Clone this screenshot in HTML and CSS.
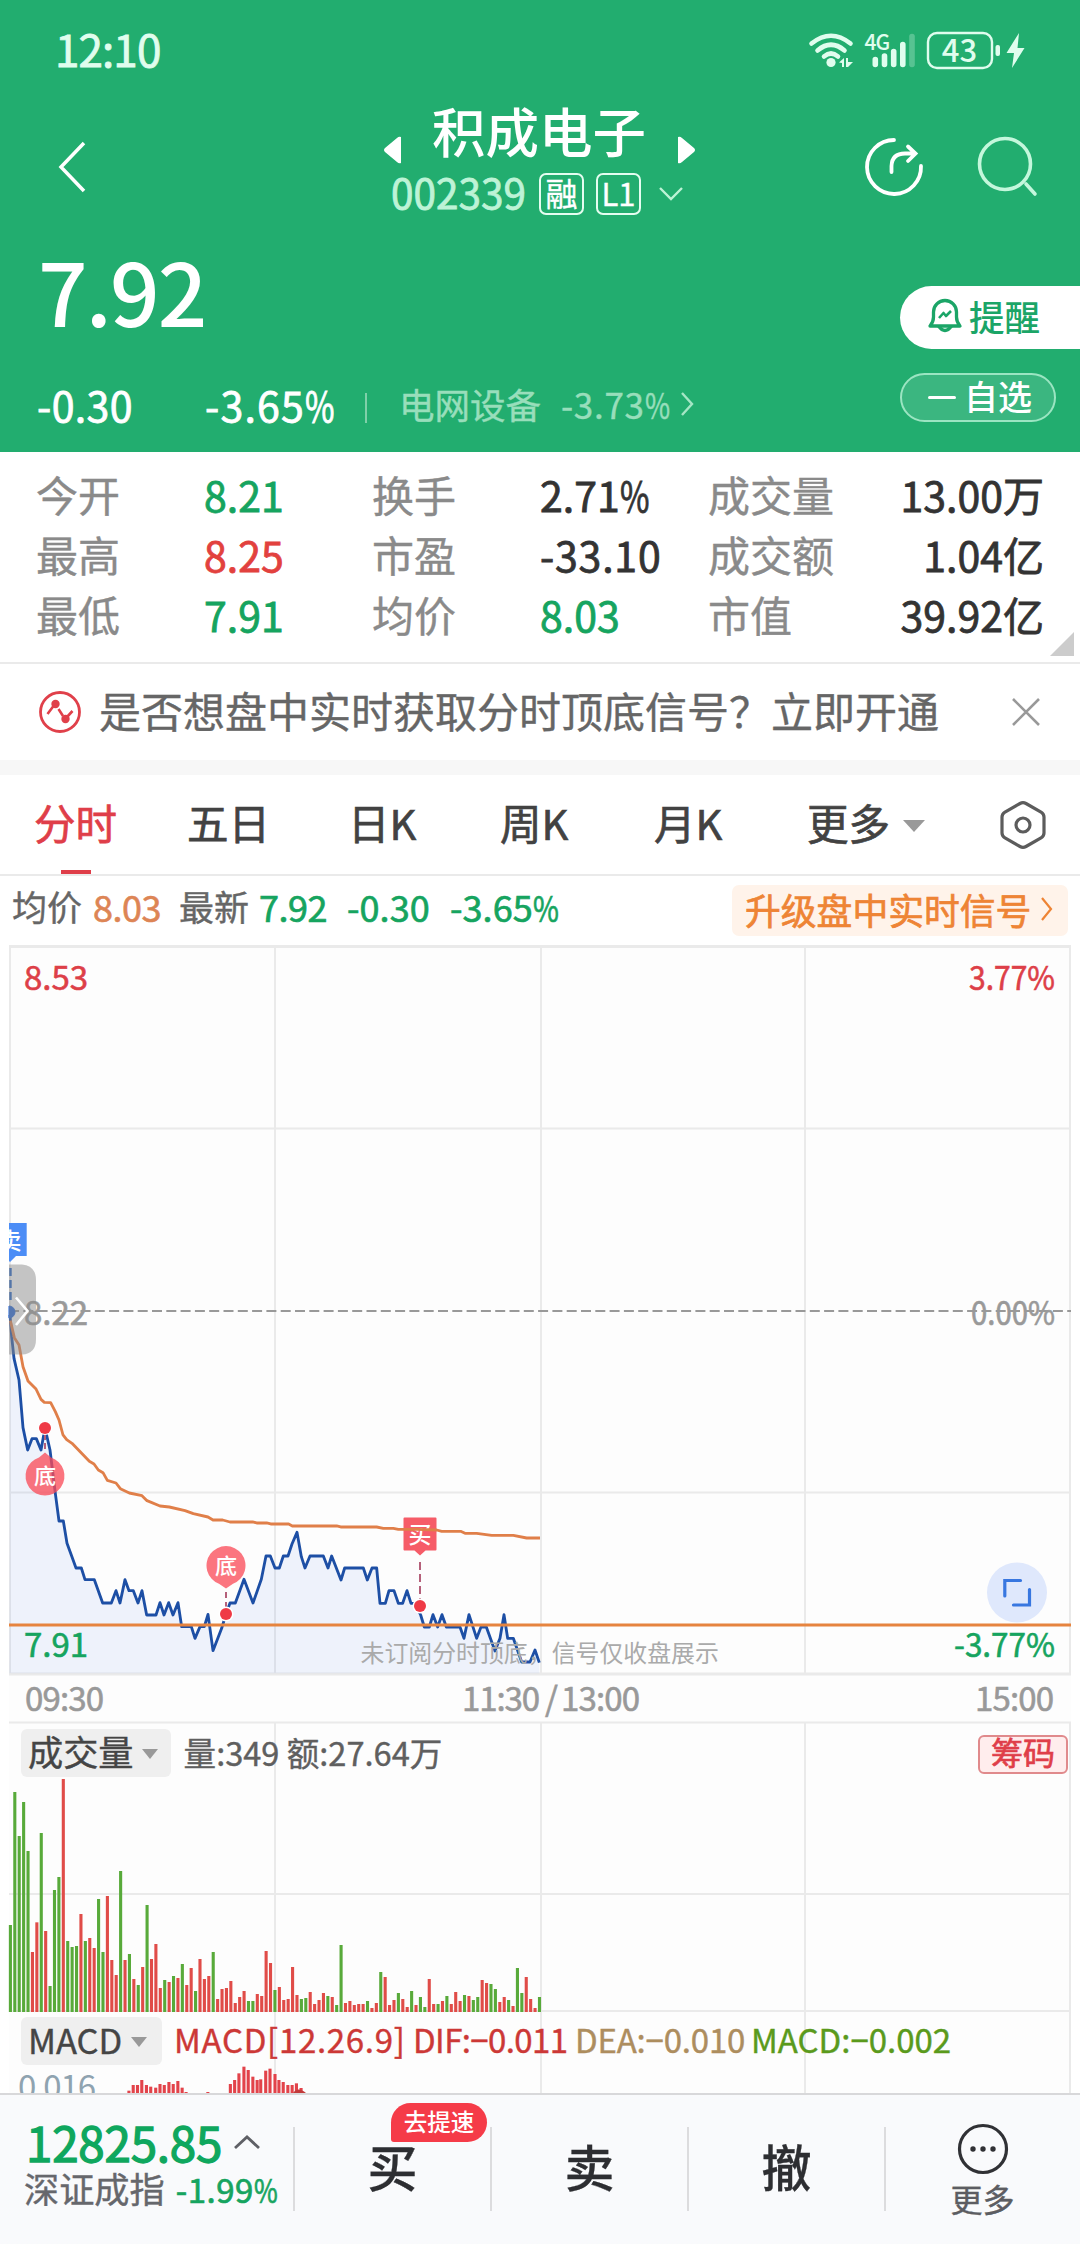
FILE: index.html
```html
<!DOCTYPE html>
<html lang="zh-CN">
<head>
<meta charset="utf-8">
<title>积成电子 002339</title>
<link rel="stylesheet" href="styles.css">
</head>
<body>
<header class="hero">
  <div class="status">
    <span class="clock">12:10</span>
    <svg class="status-icons" width="220" height="44" viewBox="806 28 220 44">
      <g fill="none" stroke="#e0fdee" stroke-width="4.6" stroke-linecap="round">
        <path d="M811.500 43.500Q831 28 850.500 43.500M817.500 50.500Q831 39 844.500 50.500M824 56.500Q831 50.500 838 56.500"/>
      </g>
      <circle cx="831" cy="62.500" r="4.600" fill="#e0fdee"/>
      <path d="M839 62.500L844 58V67H842V63ZM846 58H848V62H853L848 67H846Z" fill="#e0fdee"/>
      <text x="864.500" y="50" class="net">4G</text>
      <g stroke="#e0fdee" stroke-width="5.600" stroke-linecap="round">
        <path d="M875.300 59.500V64.500M884.500 56V64.500M893.700 51.500V64.500M902.800 44.500V64.500"/>
        <path d="M912 36.500V64.500" opacity=".28"/>
      </g>
      <rect x="928" y="33" width="64" height="35" rx="9" fill="none" stroke="#e0fdee" stroke-width="2.400"/>
      <text x="959.500" y="61.500" text-anchor="middle" class="level">43</text>
      <rect x="995.500" y="45" width="4.500" height="11" rx="2" fill="#e0fdee"/>
      <path d="M1019 33L1006.500 53H1014L1012 68L1024.500 48H1017.500Z" fill="#e0fdee"/>
    </svg>
  </div>
  <div class="titlebar">
    <svg class="back" width="32" height="56" viewBox="0 0 32 56"><path d="M29 4L6 28L29 52" fill="none" stroke="#fff" stroke-width="3.500"/></svg>
    <div class="stock">
      <div class="name-row">
        <svg width="20" height="28" viewBox="0 0 20 28"><path d="M18 1V27Q16 28 14 26L2 16Q0 14 2 12L14 2Q16 0 18 1Z" fill="#fff"/></svg>
        <h1>积成电子</h1>
        <svg width="20" height="28" viewBox="0 0 20 28"><path d="M2 1V27Q4 28 6 26L18 16Q20 14 18 12L6 2Q4 0 2 1Z" fill="#fff"/></svg>
      </div>
      <div class="code-row">
        <span class="code">002339</span><span class="chip">融</span><span class="chip">L1</span>
        <svg width="26" height="16" viewBox="0 0 26 16"><path d="M2 2L13 13L24 2" fill="none" stroke="#bdf3d6" stroke-width="2.400"/></svg>
      </div>
    </div>
    <div class="tools">
      <svg width="60" height="60" viewBox="0 0 60 60" fill="none" stroke="#fff" stroke-width="3.800" stroke-linecap="round"><path d="M31 3A27 27 0 1 0 58 29"/><path d="M28.500 35V29Q29 16.500 42 16.500H52M45 9.500L52.500 16.500L45 24"/></svg>
      <svg width="60" height="60" viewBox="0 0 60 60" fill="none" stroke="#c4f7dc" stroke-width="3.600" stroke-linecap="round"><circle cx="28" cy="27" r="25.500"/><path d="M49 47L58 57"/></svg>
    </div>
  </div>
  <div class="quote">
    <div class="quote-main">
      <div class="price">7.92</div>
      <div class="change-row">
        <span class="delta">-0.30</span><span class="pct">-3.65<span class="p">%</span></span><i class="bar"></i>
        <span class="sector">电网设备</span><span class="sector-pct">-3.73<span class="p">%</span></span>
        <svg width="14" height="26" viewBox="0 0 14 26"><path d="M2 2L12 13L2 24" fill="none" stroke="#a5e6c5" stroke-width="2.400"/></svg>
      </div>
    </div>
    <div class="quote-actions">
      <div class="remind">
        <svg width="34" height="36" viewBox="0 0 34 36" fill="none" stroke="#1ba567" stroke-width="3.300" stroke-linejoin="round"><path d="M5.500 19V14A11.500 11.500 0 0 1 28.500 14V19Q28.500 24 32 28H2Q5.500 24 5.500 19Z"/><path d="M10.500 28Q17 37 23.500 28"/><path d="M11 20L15.500 15L18 18L23 13" stroke-width="2.600"/></svg>
        <span>提醒</span>
      </div>
      <div class="watch"><i></i><span>自选</span></div>
    </div>
  </div>
</header>

<section class="stats">
  <span class="k">今开</span><span class="v green">8.21</span><span class="k">换手</span><span class="v">2.71<span class="p">%</span></span><span class="k">成交量</span><span class="v end">13.00万</span>
  <span class="k">最高</span><span class="v red">8.25</span><span class="k">市盈</span><span class="v wide">-33.10</span><span class="k">成交额</span><span class="v end">1.04亿</span>
  <span class="k">最低</span><span class="v green">7.91</span><span class="k">均价</span><span class="v green">8.03</span><span class="k">市值</span><span class="v end">39.92亿</span>
  <i class="corner"></i>
</section>

<section class="notice">
  <svg width="44" height="44" viewBox="0 0 44 44"><circle cx="22" cy="22" r="19.500" fill="none" stroke="#e0404a" stroke-width="2.800"/><path d="M9.500 24L17 14M20.500 19L25 26M29 27L34.500 21" fill="none" stroke="#e0404a" stroke-width="2.600"/><circle cx="17.500" cy="14" r="4.200" fill="#e0404a"/><circle cx="27.500" cy="29" r="4.200" fill="#e0404a"/></svg>
  <p>是否想盘中实时获取分时顶底信号？立即开通</p>
  <svg width="30" height="30" viewBox="0 0 30 30"><path d="M2 2L28 28M28 2L2 28" stroke="#999" stroke-width="2.600"/></svg>
</section>

<nav class="tabs">
  <span class="tab active">分时</span><span class="tab">五日</span><span class="tab">日K</span><span class="tab">周K</span><span class="tab">月K</span>
  <span class="tab more">更多<i class="tri"></i></span>
  <svg width="46" height="50" viewBox="0 0 46 50" fill="none" stroke="#5c5c5c" stroke-width="3.200"><path d="M20 3.500Q23 1.800 26 3.500L41 12Q44 14 44 17V33Q44 36 41 38L26 46.500Q23 48.200 20 46.500L5 38Q2 36 2 33V17Q2 14 5 12Z"/><circle cx="23" cy="25" r="7"/></svg>
</nav>

<section class="info">
  <span class="lbl">均价</span><span class="avg">8.03</span><span class="lbl last">最新</span><span class="green n">7.92</span><span class="green n">-0.30</span><span class="green n">-3.65<span class="p">%</span></span>
  <div class="upgrade"><span>升级盘中实时信号</span><svg width="14" height="26" viewBox="0 0 14 26"><path d="M2 2L11 13L2 24" fill="none" stroke="#ee8435" stroke-width="2.200"/></svg></div>
</section>

<section class="charts">
  <svg class="plot" width="1080" height="1149" viewBox="0 944 1080 1149">
    <rect x="9" y="945" width="1062" height="1148" fill="#fdfdfd"/>
    <g stroke="#eaeaea" stroke-width="2">
      <path d="M9 946.500H1071" stroke-width="3"/>
      <path d="M9 1128.500H1071M9 1492.500H1071M9 1722.500H1071M9 1894H1071M9 2011H1071"/>
      <path d="M9 1674H1071" stroke-width="3"/>
      <path d="M10 945V1675M275 945V1675M541 945V1675M805 945V1675M1070 945V1675M275 1722V2093M541 1722V2093M805 1722V2093M1070 1722V2093"/>
    </g>
    <path d="M9 1311H1071" stroke="#999" stroke-width="2" stroke-dasharray="10 4.300"/>
    <g transform="translate(0 1200) scale(.33333)" fill="none" stroke-linejoin="round">
      <path id="price-area" fill="#3a78e0" fill-opacity=".08"/>
      <path id="price-line" stroke="#1d4fa5" stroke-width="8.500"/>
    </g>
    <g id="signals">
      <path d="M9 1223H26.700V1256H16L10 1262L9 1261Z" fill="#4c8df6"/>
      <svg x="9" y="1223" width="18" height="34" viewBox="9 1223 18 34"><text x="10" y="1248.500" text-anchor="middle" class="flag">卖</text></svg>
      <path d="M10.500 1268V1304" stroke="#1d5fc4" stroke-width="2.400" stroke-dasharray="8 4"/>
      <path d="M9 1306A6 6 0 0 1 9 1318Z" fill="#1f63d6" stroke="#1f63d6" stroke-width="1"/>

      <path d="M45 1434V1450" stroke="#b5607a" stroke-width="2" stroke-dasharray="6 3"/>
      <path d="M45 1452.500L51 1457.500A19.500 19.500 0 1 1 39 1457.500Z" fill="#fa4a57" fill-opacity=".76"/>
      <text x="45" y="1484" class="flag pin" text-anchor="middle">底</text>
      <circle cx="45" cy="1428" r="7" fill="#fff"/><circle cx="45" cy="1428" r="6" fill="#ef3a46"/>

      <path d="M226 1592V1608" stroke="#b5607a" stroke-width="2" stroke-dasharray="6 4"/>
      <path d="M226 1588.500L219 1583.800A19.500 19.500 0 1 1 233 1583.800Z" fill="#fa4a57" fill-opacity=".76"/>
      <text x="226" y="1574" class="flag pin" text-anchor="middle">底</text>
      <circle cx="226" cy="1614" r="7.500" fill="#fff"/><circle cx="226" cy="1614" r="6" fill="#ef3a46"/>

      <path d="M420 1562V1600" stroke="#b5607a" stroke-width="2" stroke-dasharray="8 4"/>
      <path d="M404.500 1517.500H435.500Q436.500 1517.500 436.500 1518.500V1549.500Q436.500 1550.500 435.500 1550.500H425.500L420 1555.500L414.500 1550.500H404.500Q403.500 1550.500 403.500 1549.500V1518.500Q403.500 1517.500 404.500 1517.500Z" fill="#f5505c" fill-opacity=".93"/>
      <text x="420" y="1542.500" class="flag" text-anchor="middle">买</text>
      <circle cx="420" cy="1606" r="7.500" fill="#fff"/><circle cx="420" cy="1606" r="6" fill="#ef3a46"/>
    </g>
    <g transform="translate(0 1200) scale(.33333)" fill="none" stroke-linejoin="round"><path id="avg-line" stroke="#e07f49" stroke-width="8.500"/></g>
    <path d="M9 1625H1071" stroke="#e6843f" stroke-width="3"/>
    <g class="axis">
      <text x="24" y="990" class="up">8.53</text><text x="1055" y="990" class="up" text-anchor="end" textLength="86" lengthAdjust="spacingAndGlyphs">3.77%</text>
      <text x="24" y="1325" class="flat">8.22</text><text x="1055" y="1325" class="flat" text-anchor="end" textLength="84" lengthAdjust="spacingAndGlyphs">0.00%</text>
      <text x="24" y="1657" class="down">7.91</text><text x="1055" y="1657" class="down" text-anchor="end" textLength="101" lengthAdjust="spacingAndGlyphs">-3.77%</text>
      <text x="25" y="1711" textLength="79" class="flat">09:30</text><text x="462" y="1711" textLength="78" class="flat">11:30</text><text x="545" y="1711" class="flat">/</text><text x="561" y="1711" textLength="79" class="flat">13:00</text><text x="1054" y="1711" text-anchor="end" textLength="79" class="flat">15:00</text>
    </g>
    <text x="360.500" y="1662" class="hint">未订阅分时顶底，信号仅收盘展示</text>
    <g id="volume"></g>
    <g id="macd"></g>
    <path d="M293 2093Q298 2086 306 2093Z" fill="#c23a3a"/>
    <text x="18" y="2099" class="macd-scale" textLength="78">0.016</text>
    <path d="M9 1264.500H22Q36 1266 36 1280V1339Q36 1354 22 1354.500H9Z" fill="#8c8c8c" fill-opacity=".5"/>
    <path d="M16 1297.500L27.500 1311L16 1325" fill="none" stroke="#fff" stroke-width="2.600"/>
    <circle cx="1017" cy="1592.500" r="30" fill="#dfe8fc"/>
    <path d="M1004.800 1596V1580.500H1020.500M1029.500 1589.500V1605H1013.500" fill="none" stroke="#3877e0" stroke-width="3.200" stroke-linecap="round"/>
  </svg>
  <div class="panel-head volume-head">
    <span class="select">成交量<i class="tri"></i></span>
    <span class="vol-text">量:349 额:27.64万</span>
    <span class="chips">筹码</span>
  </div>
  <div class="panel-head macd-head">
    <span class="select">MACD<i class="tri"></i></span>
    <span class="m1">MACD[12.26.9]</span><span class="m2">DIF:−0.011</span><span class="m3">DEA:−0.010</span><span class="m4">MACD:−0.002</span>
  </div>
</section>

<footer class="dock">
  <div class="index">
    <div class="index-top"><span>12825.85</span><svg width="28" height="16" viewBox="0 0 28 16"><path d="M2 14L14 3L26 14" fill="none" stroke="#5f6066" stroke-width="2.800"/></svg></div>
    <div class="index-sub"><span>深证成指</span><b>-1.99<span class="p">%</span></b></div>
  </div>
  <div class="act">买<em>去提速</em></div>
  <div class="act">卖</div>
  <div class="act">撤</div>
  <div class="act-more">
    <svg width="52" height="52" viewBox="0 0 52 52"><circle cx="26" cy="26" r="23.500" fill="none" stroke="#303135" stroke-width="3.200"/><circle cx="16" cy="26" r="2.700" fill="#303135"/><circle cx="26" cy="26" r="2.700" fill="#303135"/><circle cx="36" cy="26" r="2.700" fill="#303135"/></svg>
    <span>更多</span>
  </div>
</footer>
<script src="chart.js"></script>
</body>
</html>
```
FILE: styles.css
```css
* { box-sizing: border-box; margin: 0; padding: 0; }
body {
  width: 1080px; height: 2244px; overflow: hidden;
  background: #fff; color: #333;
  font-family: "Noto Sans CJK SC", "Noto Sans", sans-serif;
  font-size: 42px; font-weight: 400; line-height: 1;
  -webkit-text-stroke: .4px;
  display: flex; flex-direction: column;
}
svg { display: block; flex: none; overflow: visible; }
svg svg, .plot { overflow: hidden; }
i { display: block; }
i, em { font-style: normal; }
.green { color: #16a45f; }
.red { color: #e2413e; }
.tri { border: 11px solid transparent; border-top: 12px solid #999; border-bottom: 0; }
/* condensed percent sign */
.p { display: inline-block; transform: scaleX(.78); transform-origin: left; margin-right: -.2em; }

/* green header */
.hero { height: 452px; background: #22ad6f; color: #fff; display: flex; flex-direction: column; flex: none; }
.status { height: 96px; padding: 4px 54px 0 55px; display: flex; justify-content: space-between; align-items: center; }
.clock { font-size: 44px; color: #e0fdee; letter-spacing: -.9px; line-height: 50px; margin-top: -4px; -webkit-text-stroke: .8px; }
.net { font-size: 21px; font-weight: 500; fill: #e0fdee; letter-spacing: -1px; }
.level { font-size: 31px; fill: #e0fdee; font-weight: 500; }
.titlebar { height: 134px; display: flex; justify-content: space-between; padding: 0 43px 0 55px; }
.back { margin-top: 43px; }
.stock { width: 320px; margin-left: 128px; display: flex; flex-direction: column; align-items: center; }
.name-row { display: flex; gap: 29.500px; height: 73px; }
.name-row svg { margin-top: 40px; }
h1 { font-size: 53.500px; font-weight: 500; line-height: 70px; margin-top: -1px; -webkit-text-stroke: 0; }
.code-row { display: flex; align-items: center; height: 48px; margin: 1px 0 0 -3px; }
.code { font-size: 40.500px; color: #bdf3d6; margin-right: 13px; line-height: 44px; margin-top: -4px; -webkit-text-stroke: .8px; }
.chip { width: 45px; height: 42px; border: 2px solid #e4fdf0; border-radius: 7px; font-size: 32px; line-height: 35px; text-align: center; margin-right: 12px; }
.chip:nth-child(3) { font-size: 31px; margin-right: 17px; }
.tools { display: flex; gap: 54px; margin-top: 41px; }
.quote { flex: 1; display: flex; justify-content: space-between; }
.price { font-size: 87px; font-weight: 500; line-height: 100px; margin: 9px 0 0 38px; letter-spacing: -1.800px; -webkit-text-stroke: 0; }
.change-row { display: flex; align-items: center; height: 50px; margin: 40px 0 0 37px; font-size: 41px; line-height: 50px; -webkit-text-stroke: .8px; }
.delta { width: 168px; letter-spacing: .4px; } .pct { width: 160px; letter-spacing: 1.200px; }
.bar { width: 2px; height: 30px; background: #7fd0a9; margin-top: 7px; }
.sector { color: #98debb; font-size: 35.500px; margin-left: 32px; -webkit-text-stroke: .4px; }
.sector-pct { color: #98debb; font-size: 35px; margin: 0 9px 0 20px; letter-spacing: .7px; -webkit-text-stroke: .4px; }
.quote-actions { width: 180px; padding-top: 56px; }
.remind { height: 63px; background: #fff; border-radius: 32px 0 0 32px; padding: 0 0 3px 28px; display: flex; align-items: center; gap: 7px; color: #1ba567; font-size: 35.500px; font-weight: 500; -webkit-text-stroke: 0; }
.watch { width: 156px; height: 49px; margin-top: 24px; border: 2px solid #9be5c2; border-radius: 25px; background: #3bb680; display: flex; align-items: center; padding: 0 0 4px 26px; gap: 8px; font-size: 34px; font-weight: 500; -webkit-text-stroke: 0; }
.watch i { width: 28px; height: 3px; background: #fff; border-radius: 2px; margin-top: 4px; }

/* quote table */
.stats { height: 212px; flex: none; border-bottom: 2px solid #eaeaea; position: relative; padding: 12px 36px 0; display: grid; grid-template-columns: 168px 168px 168px 168px 150px 1fr; grid-auto-rows: 60px; line-height: 60px; }
.k { color: #8a8a8a; }
.v { font-size: 41px; -webkit-text-stroke: .8px; white-space: nowrap; letter-spacing: 0; }
.v.wide { letter-spacing: .800px; }
.v.end { text-align: right; letter-spacing: 0; }
.corner { position: absolute; right: 6px; bottom: 6px; border-left: 24px solid transparent; border-bottom: 24px solid #ccc; }

.notice { height: 111px; flex: none; border-bottom: 15px solid #f7f7f7; display: flex; align-items: center; padding: 0 39px 0 38px; color: #666; }
.notice p { margin-left: 17px; font-size: 42px; flex: 1; margin-top: -5px; white-space: nowrap; }

.tabs { height: 101px; flex: none; border-bottom: 2px solid #eaeaea; display: flex; align-items: center; color: #424242; font-size: 41.500px; padding: 0 34px 0 34px; line-height: 95px; -webkit-text-stroke: .7px; }
.tab { position: relative; width: 153px; height: 99px; white-space: nowrap; }
.tab:nth-child(2) { width: 161px; } .tab:nth-child(3) { width: 152px; } .tab:nth-child(4) { width: 154px; } .tab:nth-child(5) { width: 153px; }
.more { display: flex; align-items: center; gap: 13px; flex: 1; line-height: 99px; padding-bottom: 4px; }
.more .tri { margin-top: 7px; }
.active { color: #df3e49; }
.active::after { content: ""; position: absolute; left: 27px; bottom: 0; width: 30px; height: 4px; background: #df3e49; }

.info { height: 68px; flex: none; display: flex; align-items: center; padding: 0 12px 8px; font-size: 36px; line-height: 50px; }
.lbl { color: #666; font-size: 35px; } .last { margin-left: 18px; }
.avg { color: #dd8555; margin-left: 11px; letter-spacing: -.5px; -webkit-text-stroke: .6px; }
.info .n { margin-left: 10px; -webkit-text-stroke: .7px; letter-spacing: -.5px; } .info .n + .n { margin-left: 20px; letter-spacing: .1px; }
.upgrade { margin-left: auto; width: 336px; height: 51px; margin-top: 8px; border-radius: 7px; background: #fff3ea; color: #ee8435; display: flex; align-items: center; padding: 0 0 3px 13px; gap: 9px; font-size: 35.800px; -webkit-text-stroke: .7px; white-space: nowrap; }

/* charts */
.charts { height: 1149px; flex: none; position: relative; }
.axis text { font-size: 33px; stroke-width: .6px; }
.up { fill: #dd3f48; stroke: #dd3f48; } .flat { fill: #999; stroke: #999; } .down { fill: #16a45f; stroke: #16a45f; }
.hint { font-size: 23.900px; fill: #aaa; }
.flag { font-size: 23px; font-weight: 500; fill: #fff; } .pin { font-size: 22px; }
.macd-scale { font-size: 33px; fill: #8fa3b0; }
.panel-head { position: absolute; left: 21px; right: 12px; display: flex; align-items: center; height: 48px; font-size: 33px; white-space: nowrap; }
.volume-head { top: 785px; } .macd-head { top: 1073px; }
.select { height: 48px; background: #efefef; border-radius: 6px; display: flex; align-items: center; gap: 8px; padding: 0 13px 4px 7px; font-size: 35.200px; color: #454545; }
.select .tri { border-width: 10px 8px 0; margin-top: 5px; }
.vol-text { margin: -2px 0 0 13px; font-size: 32.600px; color: #5f5f5f; }
.chips { margin-left: auto; width: 90px; height: 39px; margin-top: 2px; border: 2px solid #e08a8c; border-radius: 6px; background: #ffeded; color: #df3e49; font-size: 32px; line-height: 29px; text-align: center; -webkit-text-stroke: .7px; }
.macd-head .select { width: 141px; font-size: 34.500px; margin-right: 12px; gap: 9px; }
.macd-head > span:not(.select) { margin-top: -3px; }
.m1 { color: #cc3836; width: 239px; letter-spacing: .7px; } .m2 { color: #cc3836; width: 162px; letter-spacing: -.6px; } .m3 { color: #ad8d5e; width: 176px; letter-spacing: -.2px; } .m4 { color: #5a9a1c; }

/* bottom dock */
.dock { position: relative; height: 151px; flex: none; border-top: 2px solid #d8d8da; background: #f9fafc; display: flex; }
.index { width: 294px; padding: 20px 0 0 24px; white-space: nowrap; }
.index-top { display: flex; align-items: center; gap: 11px; font-size: 47.500px; -webkit-text-stroke: 1.3px; color: #0fa75e; line-height: 54px; letter-spacing: -.2px; padding-left: 2px; }
.index-sub { display: flex; align-items: center; gap: 11px; font-size: 35.200px; color: #66676c; line-height: 44px; margin-top: -4px; }
.index-sub b { color: #16a45f; font-size: 33px; font-weight: 400; -webkit-text-stroke: .7px; margin-top: 2px; letter-spacing: .5px; }
.act, .act-more { position: relative; flex: none; width: 197px; height: 116px; display: flex; justify-content: center; align-items: center; font-size: 50px; font-weight: 500; padding-top: 24px; color: #2d2e32; -webkit-text-stroke: .3px; }
.act::before, .act-more::before { content: ""; position: absolute; left: -1px; top: 32px; height: 84px; width: 2px; background: #dcdcde; }
.act em { position: absolute; left: 97px; top: 8px; width: 96px; height: 39px; border-radius: 20px 20px 20px 3px; background: #f53b48; color: #fff; font-size: 23.500px; line-height: 36px; text-align: center; -webkit-text-stroke: 0; }
.act-more { flex-direction: column; justify-content: flex-start; padding-top: 28px; gap: 7px; width: 195px; }
.act-more span { font-size: 32px; color: #5c5d62; font-weight: 400; -webkit-text-stroke: .4px; }
```
FILE: chart.js
```js
// Traces are stored in third-pixel units, y measured from the 1200px line.
const price = "30,345 35,410 42,475 57,540 69,683 83,750 96,716 109,716 123,750 135,684 150,750 166,880 177,963 190,963 201,1030 215,1068 228,1104 244,1104 255,1139 283,1139 308,1209 334,1209 348,1172 360,1209 375,1139 387,1172 400,1172 414,1209 426,1172 440,1245 468,1245 480,1208 492,1245 506,1208 519,1245 534,1208 545,1280 574,1280 585,1315 600,1280 613,1280 624,1243 639,1352 665,1285 678,1242 690,1209 706,1209 732,1138 759,1209 784,1138 798,1068 811,1068 825,1104 838,1104 850,1068 864,1068 876,1032 891,997 904,1070 915,1104 930,1068 970,1068 984,1104 995,1068 1023,1140 1034,1104 1090,1104 1102,1140 1116,1104 1130,1104 1140,1210 1156,1210 1167,1172 1182,1172 1195,1210 1208,1210 1221,1172 1233,1210 1245,1210 1262,1245 1273,1281 1288,1281 1299,1244 1313,1281 1326,1244 1339,1281 1380,1281 1392,1315 1407,1244 1430,1315 1443,1281 1459,1281 1485,1353 1500,1315 1512,1244 1523,1315 1540,1315 1565,1386 1590,1386 1605,1350 1618,1388";
const avg = "31,362 43,413 57,435 69,500 84,543 108,567 123,598 133,607 152,608 166,635 177,660 189,705 200,719 216,730 268,784 282,792 295,810 309,818 322,841 348,849 361,866 388,879 426,887 441,902 480,918 508,921 555,932 580,941 624,951 639,960 668,960 690,966 758,966 770,969 800,969 812,972 866,972 877,978 1010,978 1022,981 1130,981 1150,985 1180,985 1195,988 1250,988 1310,990 1325,994 1382,994 1395,1000 1430,1000 1475,1006 1540,1006 1580,1014 1620,1014";
const toPath = s => "M" + s.split(" ").join("L");
document.getElementById("price-line").setAttribute("d", toPath(price));
document.getElementById("price-area").setAttribute("d", toPath(price) + "L1618,1420L28,1420Z");
document.getElementById("avg-line").setAttribute("d", toPath(avg));

function bar(group, x, top, bottom, color, w) {
  const r = document.createElementNS("http://www.w3.org/2000/svg", "rect");
  r.setAttribute("x", x - w / 2);
  r.setAttribute("y", top);
  r.setAttribute("width", w);
  r.setAttribute("height", bottom - top);
  r.setAttribute("fill", color);
  document.getElementById(group).appendChild(r);
}

// One entry per minute: direction and bar top.
const volume = "g735 g336 g468 g366 g513 r816 r727 g459 r753 g918 g630 g591 r297 g783 g801 g798 r702 g783 r774 r804 g657 g816 r648 r840 r885 g573 r840 g822 r897 g915 r861 g675 r837 r792 r924 g900 r906 g888 r894 g852 r915 r864 g933 r837 r897 r888 g816 r957 r927 r924 r903 r969 r951 r933 g963 g963 r942 r948 r813 r849 g930 r921 r960 r957 r861 r945 g957 g954 r936 r972 r960 r939 g948 r951 g975 g795 r969 r963 r975 r972 r972 g963 r984 r969 g876 r891 r975 r960 g939 r957 r981 g933 r975 g951 g981 r897 r972 g972 r963 g948 r972 r936 r963 g945 r948 g960 g951 r900 r909 g912 g927 r966 r951 g960 r978 g864 g939 r891 r957 r984 g951";
volume.split(" ").forEach((v, i) => {
  bar("volume", 10.4 + i * 4.409, 1680 + v.slice(1) / 3, 2012, v[0] === "g" ? "#58aa3a" : "#e04c48", 3.1);
});

const macd = [[361,1232],[373,1215],[385,1215],[397,1200],[410,1215],[422,1220],[436,1223],[448,1212],[460,1215],[473,1206],[485,1212],[498,1203],[510,1223],[521,1236],[582,1236],[645,1212],[657,1200],[669,1180],[683,1160],[695,1170],[708,1190],[720,1200],[730,1198],[744,1172],[756,1166],[770,1182],[781,1200],[793,1206],[806,1215],[818,1215],[830,1210],[843,1224]];
macd.forEach(([x, y]) => bar("macd", x / 2.8, 1680 + y / 3, 2093, "#e2434a", 3.1));
```
